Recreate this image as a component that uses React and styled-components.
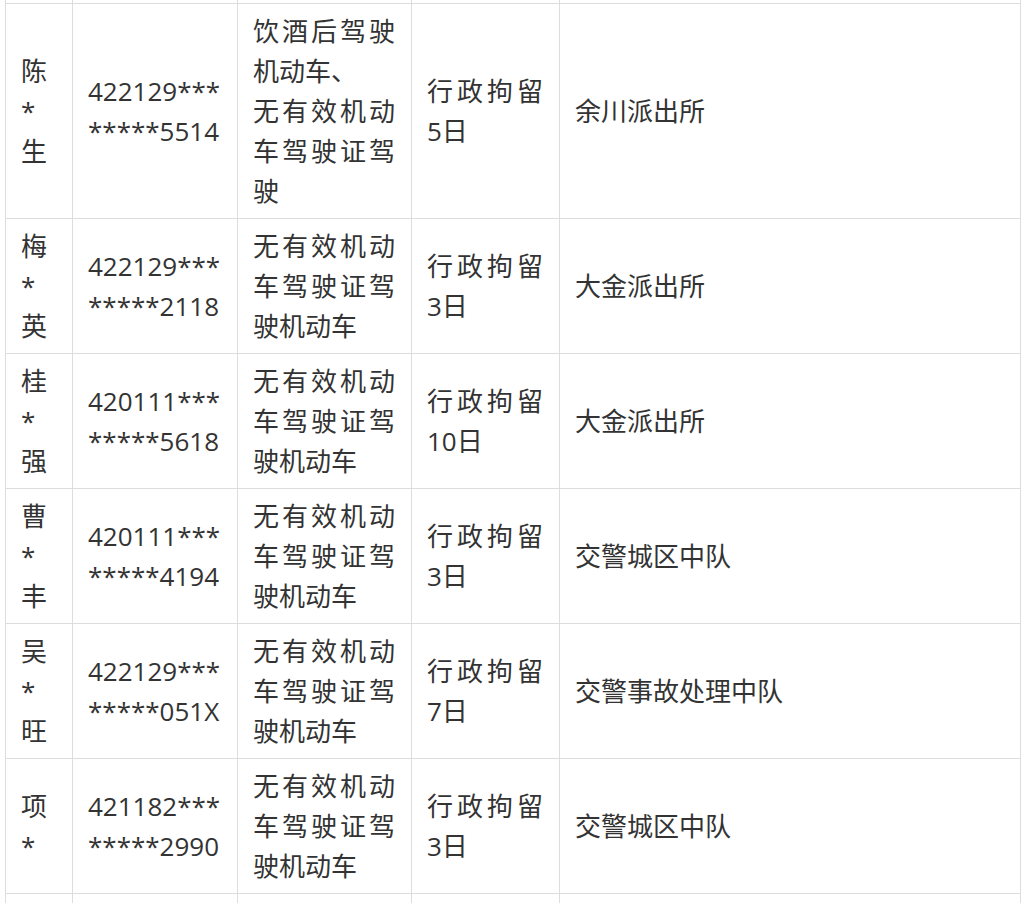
import React from "react";
import styled, { createGlobalStyle } from "styled-components";

const Global = createGlobalStyle`
  html, body { margin: 0; padding: 0; background: #fff; }
  body { font-family: "Open Sans", "Noto Sans CJK SC", sans-serif; color: #333; }
`;

const Page = styled.div`
  padding: 0 8px 0 5px;
`;

const Table = styled.table`
  border-collapse: collapse;
  table-layout: fixed;
  width: 1015px;
  font-size: 26px;
  line-height: 40px;
  color: #333;
`;

const Cell = styled.td`
  border: 1px solid #ddd;
  padding: 7px 16px 7px 15px;
  vertical-align: middle;
  text-align: justify;
  word-break: ${(p) => (p.$breakAll ? "break-all" : "normal")};
  overflow-wrap: anywhere;
`;

const IdLine = styled.div`
  white-space: nowrap;
  text-align: left;
`;

const EdgeCell = styled.td`
  border-left: 1px solid #ddd;
  border-right: 1px solid #ddd;
  border-top: none;
  border-bottom: 1px solid #ddd;
  padding: 0;
  height: ${(p) => p.$h}px;
`;

const widths = [67, 165, 174, 148, 461];

const rows = [
  {
    name: "陈*生",
    id: ["422129***", "*****5514"],
    reason: (
      <>
        饮酒后驾驶机动车、
        <br />
        无有效机动车驾驶证驾驶
      </>
    ),
    penalty: "行政拘留5日",
    unit: "余川派出所",
  },
  { name: "梅*英", id: ["422129***", "*****2118"], reason: "无有效机动车驾驶证驾驶机动车", penalty: "行政拘留3日", unit: "大金派出所" },
  { name: "桂*强", id: ["420111***", "*****5618"], reason: "无有效机动车驾驶证驾驶机动车", penalty: "行政拘留10日", unit: "大金派出所" },
  { name: "曹*丰", id: ["420111***", "*****4194"], reason: "无有效机动车驾驶证驾驶机动车", penalty: "行政拘留3日", unit: "交警城区中队" },
  { name: "吴*旺", id: ["422129***", "*****051X"], reason: "无有效机动车驾驶证驾驶机动车", penalty: "行政拘留7日", unit: "交警事故处理中队" },
  { name: "项*", id: ["421182***", "*****2990"], reason: "无有效机动车驾驶证驾驶机动车", penalty: "行政拘留3日", unit: "交警城区中队" },
];

export default function App() {
  return (
    <Page>
      <Global />
      <Table>
        <colgroup>
          {widths.map((w, i) => (
            <col key={i} style={{ width: w }} />
          ))}
        </colgroup>
        <tbody>
          <tr>
            {widths.map((_, i) => (
              <EdgeCell key={i} $h={3} />
            ))}
          </tr>
          {rows.map((r, i) => (
            <tr key={i}>
              <Cell $breakAll>{r.name}</Cell>
              <Cell>
                <IdLine>{r.id[0]}</IdLine>
                <IdLine>{r.id[1]}</IdLine>
              </Cell>
              <Cell>{r.reason}</Cell>
              <Cell>{r.penalty}</Cell>
              <Cell>{r.unit}</Cell>
            </tr>
          ))}
          <tr>
            {widths.map((_, i) => (
              <EdgeCell key={i} $h={60} />
            ))}
          </tr>
        </tbody>
      </Table>
    </Page>
  );
}
